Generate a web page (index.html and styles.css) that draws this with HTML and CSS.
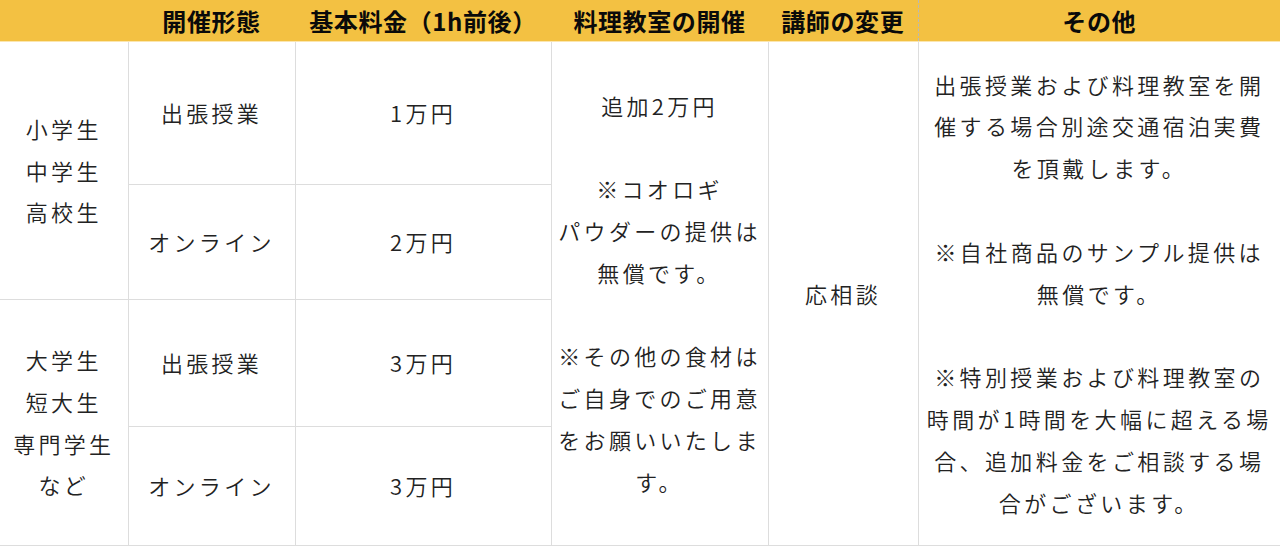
FILE: index.html
```html
<!DOCTYPE html>
<html lang="ja">
<head>
<meta charset="utf-8">
<link rel="stylesheet" href="styles.css">
</head>
<body>
<table class="price">
  <colgroup>
    <col class="c1"><col class="c2"><col class="c3"><col class="c4"><col class="c5"><col class="c6">
  </colgroup>
  <thead>
    <tr class="head">
      <th></th>
      <th>開催形態</th>
      <th>基本料金（1h前後）</th>
      <th>料理教室の開催</th>
      <th class="dash">講師の変更</th>
      <th>その他</th>
    </tr>
  </thead>
  <tbody>
    <tr class="r1">
      <td rowspan="2">小学生<br>中学生<br>高校生</td>
      <td>出張授業</td>
      <td>1万円</td>
      <td rowspan="4">追加2万円<br><br>※コオロギ<br>パウダーの提供は<br>無償です。<br><br>※その他の食材は<br>ご自身でのご用意<br>をお願いいたしま<br>す。</td>
      <td rowspan="4" class="dash">応相談</td>
      <td rowspan="4" class="other">出張授業および料理教室を開<br>催する場合別途交通宿泊実費<br>を頂戴します。<br><br>※自社商品のサンプル提供は<br>無償です。<br><br>※特別授業および料理教室の<br>時間が1時間を大幅に超える場<br>合、追加料金をご相談する場<br>合がございます。</td>
    </tr>
    <tr class="r2">
      <td>オンライン</td>
      <td>2万円</td>
    </tr>
    <tr class="r3">
      <td rowspan="2">大学生<br>短大生<br>専門学生<br>など</td>
      <td>出張授業</td>
      <td>3万円</td>
    </tr>
    <tr class="r4">
      <td>オンライン</td>
      <td>3万円</td>
    </tr>
  </tbody>
</table>
</body>
</html>
```

FILE: styles.css
```css
html, body {
  margin: 0;
  padding: 0;
  background: #ffffff;
}

.price {
  width: 1280px;
  border-collapse: collapse;
  table-layout: fixed;
  font-family: "Noto Sans CJK JP", "Noto Sans", sans-serif;
  color: #222222;
}

.c1 { width: 128px; }
.c2 { width: 167px; }
.c3 { width: 256px; }
.c4 { width: 217px; }
.c5 { width: 150px; }
.c6 { width: 362px; }

.head th {
  background: #f3c142;
  height: 41px;
  padding: 0;
  font-size: 24px;
  font-weight: 700;
  letter-spacing: 0.6px;
  color: #0a0a0a;
  text-align: center;
  vertical-align: middle;
  border-bottom: 1px solid #fbe6b0;
  line-height: 41px;
}

.head th.dash {
  border-right: 1px dashed #b8b8b8;
}

tbody td {
  padding: 0 4px;
  font-size: 22px;
  font-weight: 350;
  line-height: 41.8px;
  letter-spacing: 3.3px;
  text-align: center;
  vertical-align: middle;
  border: 1px solid #dddddd;
  white-space: nowrap;
}

tbody td:first-child {
  border-left: none;
}

tbody td.dash {
  border-right: 1px dashed #a8a8a8;
}

tbody td.other {
  border-right: none;
  letter-spacing: 3.4px;
}

.r1 { height: 143px; }
.r2 { height: 115px; }
.r3 { height: 127px; }
.r4 { height: 119px; }
```
